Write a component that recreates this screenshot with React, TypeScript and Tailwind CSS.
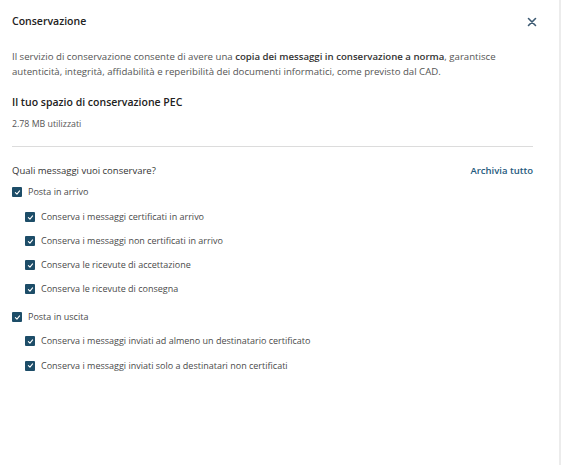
import React from "react";

const Check = ({ label }: { label: string }) => (
  <div className="flex items-center gap-[6px] h-[14px]">
    <span className="w-[10px] h-[10px] rounded-[1px] bg-[#1d4d68] flex items-center justify-center shrink-0">
      <svg width="7" height="7" viewBox="0 0 10 10" fill="none">
        <path d="M2 5.2 L4.2 7.3 L8 2.8" stroke="white" strokeWidth="1.6" strokeLinecap="round" strokeLinejoin="round" />
      </svg>
    </span>
    <span className="text-[9px] leading-[14px] text-[#4a4a4a]">{label}</span>
  </div>
);

export default function App() {
  return (
    <div className="w-[561px] h-[465px] bg-white border-r-2 border-[#ececec] font-['Open_Sans',sans-serif] relative overflow-hidden">
      <div className="px-[12px] pt-[14px]">
        <div className="flex items-center justify-between h-[16px]">
          <h1 className="text-[10.5px] font-semibold text-[#222]">Conservazione</h1>
          <svg width="10" height="10" viewBox="0 0 10 10" className="mr-[10px] -mt-[1px]">
            <path d="M1.5 1.5 L8.5 8.5 M8.5 1.5 L1.5 8.5" stroke="#3d5a73" strokeWidth="1.6" strokeLinecap="round" />
          </svg>
        </div>
        <p className="mt-[19px] text-[9.65px] leading-[15px] text-[#555] pr-[40px]">
          Il servizio di conservazione consente di avere una <span className="font-semibold text-[#333]">copia dei messaggi in conservazione a norma</span>, garantisce
          <br />
          autenticità, integrità, affidabilità e reperibilità dei documenti informatici, come previsto dal CAD.
        </p>
        <h2 className="mt-[15px] text-[10.5px] font-semibold text-[#222] leading-[16px]">Il tuo spazio di conservazione PEC</h2>
        <div className="mt-[7px] text-[8.8px] text-[#555] leading-[14px]">2.78 MB utilizzati</div>
        <div className="mt-[15px] w-[521px] h-px bg-[#dcdcdc]" />
        <div className="mt-[17px] w-[521px] flex items-center justify-between h-[14px]">
          <span className="text-[9.5px] font-medium text-[#333]">Quali messaggi vuoi conservare?</span>
          <span className="text-[9.5px] font-semibold text-[#1f5a7d]">Archivia tutto</span>
        </div>
        <div className="mt-[7px] flex flex-col">
          <Check label="Posta in arrivo" />
          <div className="pl-[13px] mt-[11px] flex flex-col gap-[10px]">
            <Check label="Conserva i messaggi certificati in arrivo" />
            <Check label="Conserva i messaggi non certificati in arrivo" />
            <Check label="Conserva le ricevute di accettazione" />
            <Check label="Conserva le ricevute di consegna" />
          </div>
          <div className="mt-[14px]">
            <Check label="Posta in uscita" />
          </div>
          <div className="pl-[13px] mt-[10px] flex flex-col gap-[10.5px]">
            <Check label="Conserva i messaggi inviati ad almeno un destinatario certificato" />
            <Check label="Conserva i messaggi inviati solo a destinatari non certificati" />
          </div>
        </div>
      </div>
    </div>
  );
}
